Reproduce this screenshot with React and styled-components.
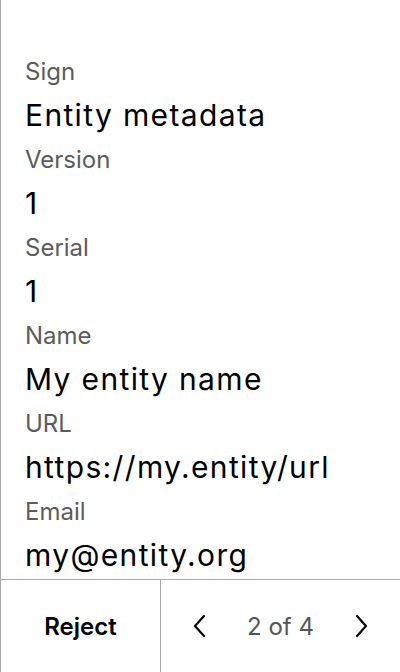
import React from "react";
import styled, { createGlobalStyle } from "styled-components";

const GlobalStyle = createGlobalStyle`
  html, body {
    margin: 0;
    padding: 0;
    background: #ffffff;
  }
  body {
    font-family: "Inter", "Noto Sans", sans-serif;
  }
`;

const Screen = styled.div`
  height: 672px;
  display: flex;
  flex-direction: column;
  border-left: 1px solid #a8a8a8;
  box-sizing: border-box;
  overflow: hidden;
`;

const Content = styled.div`
  flex: 1;
  padding: 52px 24px 0 24px;
  overflow: hidden;
`;

const Field = styled.div`
  display: flex;
  flex-direction: column;
  margin-bottom: 2px;
`;

const Label = styled.div`
  font-size: 24px;
  line-height: 40px;
  color: #5c5c5c;
`;

const Value = styled.div`
  font-size: 30px;
  line-height: 46px;
  letter-spacing: 1.35px;
  color: #000;
`;

const Footer = styled.div`
  height: 92px;
  flex-shrink: 0;
  display: flex;
  border-top: 1px solid #a8a8a8;
`;

const RejectButton = styled.button`
  width: 160px;
  border: none;
  border-right: 1px solid #a8a8a8;
  background: transparent;
  font-family: inherit;
  font-size: 24px;
  font-weight: 600;
  color: #000;
  padding: 0;
`;

const Pager = styled.div`
  flex: 1;
  display: flex;
  align-items: center;
  justify-content: space-between;
  padding: 0 16px;
`;

const NavButton = styled.button`
  width: 44px;
  height: 44px;
  display: flex;
  align-items: center;
  justify-content: center;
  border: none;
  background: transparent;
  padding: 0;
`;

const PageText = styled.span`
  font-size: 24px;
  color: #555;
`;

const Chevron = ({ dir }) => (
  <svg width="14" height="24" viewBox="0 0 14 24" fill="none">
    <path
      d={dir === "left" ? "M12 2 L3 12 L12 22" : "M2 2 L11 12 L2 22"}
      stroke="#000"
      strokeWidth="2.2"
      strokeLinecap="round"
      strokeLinejoin="round"
    />
  </svg>
);

const fields = [
  ["Sign", "Entity metadata"],
  ["Version", "1"],
  ["Serial", "1"],
  ["Name", "My entity name"],
  ["URL", "https://my.entity/url"],
  ["Email", "my@entity.org"],
];

export default function App() {
  return (
    <>
      <GlobalStyle />
      <Screen>
        <Content>
          {fields.map(([label, value]) => (
            <Field key={label}>
              <Label>{label}</Label>
              <Value>{value}</Value>
            </Field>
          ))}
        </Content>
        <Footer>
          <RejectButton>Reject</RejectButton>
          <Pager>
            <NavButton aria-label="Previous">
              <Chevron dir="left" />
            </NavButton>
            <PageText>2 of 4</PageText>
            <NavButton aria-label="Next">
              <Chevron dir="right" />
            </NavButton>
          </Pager>
        </Footer>
      </Screen>
    </>
  );
}
